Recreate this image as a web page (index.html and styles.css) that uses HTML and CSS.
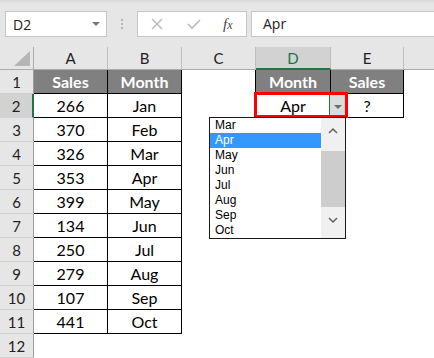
FILE: index.html
```html
<!DOCTYPE html>
<html>
<head>
<meta charset="utf-8">
<link rel="stylesheet" href="styles.css">
</head>
<body>
<div class="app">
  <div class="fbar">
    <div class="namebox"><span>D2</span><span class="caret"></span></div>
    <div class="grip"><i></i><i></i><i></i></div>
    <div class="fbtns">
      <svg class="ic-x" width="12" height="12" viewBox="0 0 12 12"><path d="M1 1 L11 11 M11 1 L1 11" stroke="#b9b9b9" stroke-width="1.4" fill="none"/></svg>
      <svg class="ic-ok" width="14" height="12" viewBox="0 0 14 12"><path d="M1 6 L5 10 L13 2" stroke="#b9b9b9" stroke-width="1.6" fill="none"/></svg>
      <span class="fx">f<span class="fxx">x</span></span>
    </div>
    <div class="finput">Apr</div>
  </div>
  <div class="sheet">
    <div class="corner"><svg width="16" height="15" viewBox="0 0 16 15"><polygon points="16,0 16,15 0,15" fill="#b5b5b5"/></svg></div>
    <div class="ch">A</div><div class="ch">B</div><div class="ch">C</div><div class="ch sel">D</div><div class="ch">E</div><div class="ch last"></div>

    <div class="rh">1</div><div class="c th">Sales</div><div class="c th">Month</div><div class="c e edge"></div><div class="c th">Month</div><div class="c th">Sales</div><div class="c e"></div>
    <div class="rh sel">2</div><div class="c">266</div><div class="c">Jan</div><div class="c e edge"></div><div class="c">Apr</div><div class="c">?</div><div class="c e"></div>
    <div class="rh">3</div><div class="c">370</div><div class="c">Feb</div><div class="c e"></div><div class="c e"></div><div class="c e"></div><div class="c e"></div>
    <div class="rh">4</div><div class="c">326</div><div class="c">Mar</div><div class="c e"></div><div class="c e"></div><div class="c e"></div><div class="c e"></div>
    <div class="rh">5</div><div class="c">353</div><div class="c">Apr</div><div class="c e"></div><div class="c e"></div><div class="c e"></div><div class="c e"></div>
    <div class="rh">6</div><div class="c">399</div><div class="c">May</div><div class="c e"></div><div class="c e"></div><div class="c e"></div><div class="c e"></div>
    <div class="rh">7</div><div class="c">134</div><div class="c">Jun</div><div class="c e"></div><div class="c e"></div><div class="c e"></div><div class="c e"></div>
    <div class="rh">8</div><div class="c">250</div><div class="c">Jul</div><div class="c e"></div><div class="c e"></div><div class="c e"></div><div class="c e"></div>
    <div class="rh">9</div><div class="c">279</div><div class="c">Aug</div><div class="c e"></div><div class="c e"></div><div class="c e"></div><div class="c e"></div>
    <div class="rh">10</div><div class="c">107</div><div class="c">Sep</div><div class="c e"></div><div class="c e"></div><div class="c e"></div><div class="c e"></div>
    <div class="rh">11</div><div class="c">441</div><div class="c">Oct</div><div class="c e"></div><div class="c e"></div><div class="c e"></div><div class="c e"></div>
    <div class="rh">12</div><div class="c e"></div><div class="c e"></div><div class="c e"></div><div class="c e"></div><div class="c e"></div><div class="c e"></div>

    <div class="ddbtn"><svg width="8" height="5" viewBox="0 0 8 5"><polygon points="0,0 8,0 4,4" fill="#6d6d6d"/></svg></div>
    <div class="redbox"></div>
    <div class="list">
      <div class="items">
        <div class="it">Mar</div>
        <div class="it on">Apr</div>
        <div class="it">May</div>
        <div class="it">Jun</div>
        <div class="it">Jul</div>
        <div class="it">Aug</div>
        <div class="it">Sep</div>
        <div class="it">Oct</div>
      </div>
      <div class="sb">
        <svg class="up" width="10" height="7" viewBox="0 0 10 7"><path d="M1 6 L5 2 L9 6" stroke="#606060" stroke-width="1.5" fill="none"/></svg>
        <div class="thumb"></div>
        <svg class="dn" width="10" height="7" viewBox="0 0 10 7"><path d="M1 1 L5 5 L9 1" stroke="#606060" stroke-width="1.5" fill="none"/></svg>
      </div>
    </div>
  </div>
</div>
</body>
</html>
```

FILE: styles.css
```css
html, body { margin: 0; padding: 0; background: #fff; }
.app { width: 434px; height: 358px; overflow: hidden; font-family: "Lato", "Liberation Sans", sans-serif; }

.fbar {
  height: 47px; box-sizing: border-box;
  background: linear-gradient(#d9d9d9 0, #e6e6e6 4px, #e6e6e6 100%);
  display: flex; align-items: flex-start;
  padding: 11px 0 0 5px;
}
.namebox {
  width: 102px; height: 26px; box-sizing: border-box;
  background: #fff; border: 1px solid #c6c6c6;
  display: flex; align-items: center; justify-content: space-between;
  padding: 0 6px 0 7px;
  font-family: "Open Sans", "Liberation Sans", sans-serif; font-size: 14px; color: #222;
}
.caret { width: 0; height: 0; border-left: 4px solid transparent; border-right: 4px solid transparent; border-top: 4px solid #777; }
.grip { width: 30px; height: 26px; display: flex; flex-direction: column; align-items: center; justify-content: center; gap: 2px; }
.grip i { width: 2px; height: 2px; background: #b5b5b5; display: block; }
.fbtns {
  width: 110px; height: 26px; box-sizing: border-box;
  background: #fff; border: 1px solid #c6c6c6;
  display: flex; align-items: center; padding-left: 13px;
}
.ic-x { margin-right: 24px; }
.ic-ok { margin-right: 22px; }
.fx { font-family: "Liberation Serif", serif; font-style: italic; font-size: 15px; color: #444; }
.fxx { font-size: 12px; }
.finput {
  flex: 1; margin-left: 4px; margin-right: -2px; height: 26px; box-sizing: border-box;
  background: #fff; border: 1px solid #c6c6c6;
  padding-left: 11px; line-height: 24px;
  font-family: "Open Sans", "Liberation Sans", sans-serif; font-size: 14px; color: #222;
}

.sheet {
  position: relative;
  display: grid;
  grid-template-columns: 34px 74px 74px 74px 75px 73px 30px;
  grid-template-rows: 23px repeat(12, 24px);
}
.corner, .ch, .rh, .c { box-sizing: border-box; }
.corner { background: #e6e6e6; border-right: 1px solid #ababab; border-bottom: 1px solid #ababab; display: flex; align-items: flex-end; justify-content: flex-end; padding: 0 3px 3px 0; }
.corner svg { display: block; }
.ch {
  background: #e6e6e6; border-right: 1px solid #bdbdbd; border-bottom: 1px solid #ababab;
  display: flex; align-items: center; justify-content: center;
  font-size: 15px; color: #222;
}
.ch.sel { background: #d2d2d2; color: #217346; border-bottom: 2px solid #217346; }
.ch.last { border-right: none; }
.rh {
  background: #e6e6e6; border-right: 1px solid #9e9e9e; border-bottom: 1px solid #d0d0d0;
  display: flex; align-items: center; justify-content: center;
  font-size: 15px; color: #222;
}
.rh.sel { background: #d2d2d2; border-right: 2px solid #217346; }
.c {
  background: #fff; border-right: 1px solid #000; border-bottom: 1px solid #000;
  display: flex; align-items: center; justify-content: center;
  font-size: 16px; color: #000;
}
.c.e { border-color: transparent; }
.c.e.edge { border-right-color: #000; }
.c.th { background: #808080; color: #fff; font-weight: bold; }

.ddbtn {
  position: absolute; left: 329px; top: 48px; width: 17px; height: 22px;
  background: #dcdcdc; border-left: 1px solid #217346; box-sizing: border-box;
  display: flex; align-items: center; justify-content: center; padding-top: 3px;
}
.ddbtn svg { display: block; }
.redbox {
  position: absolute; left: 254px; top: 45px; width: 94px; height: 26px;
  border: 3px solid #ff0000; box-sizing: border-box;
}
.list {
  position: absolute; left: 209px; top: 70px; width: 137px; height: 122px;
  box-sizing: border-box; border: 1px solid #1a1a1a; background: #fff;
  display: flex;
  font-family: "Liberation Sans", sans-serif; font-size: 12px; color: #000;
}
.items { flex: 1; }
.it { height: 15px; line-height: 15px; padding-left: 5px; }
.it.on { background: #3399ff; color: #fff; }
.sb { width: 24px; background: #f0f0f0; position: relative; display: flex; flex-direction: column; align-items: center; }
.sb .up { margin-top: 9px; display: block; }
.sb .thumb { width: 24px; height: 56px; background: #cdcdcd; margin-top: 17px; }
.sb .dn { margin-top: 10px; display: block; }
```
